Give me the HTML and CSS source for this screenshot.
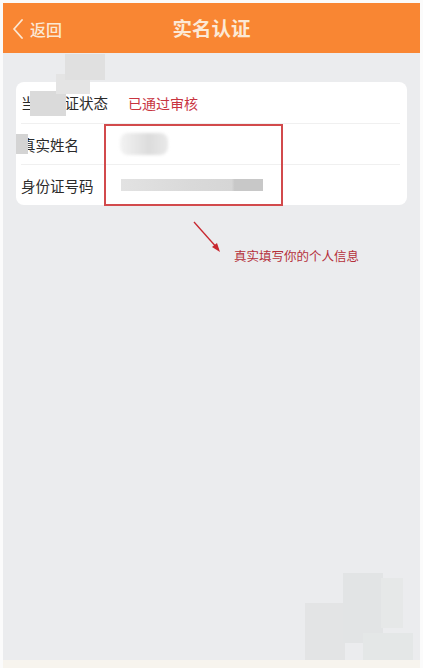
FILE: index.html
```html
<!DOCTYPE html>
<html lang="zh">
<head>
<meta charset="utf-8">
<title>实名认证</title>
<link rel="stylesheet" href="styles.css">
</head>
<body>
<div class="screen">
  <header class="header">
    <div class="back">
      <svg class="chev" width="12" height="20" viewBox="0 0 12 20"><path d="M10 1 L2 10 L10 19" fill="none" stroke="#fbe8d4" stroke-width="1.8" stroke-linecap="round" stroke-linejoin="round"/></svg>
      <span>返回</span>
    </div>
    <h1 class="title">实名认证</h1>
    <div></div>
  </header>

  <main class="main">
    <section class="card">
      <div class="row"><span class="label">当前认证状态</span><span class="value ok">已通过审核</span></div>
      <div class="row"><span class="label">真实姓名</span><span class="value"><span class="blur-name"></span></span></div>
      <div class="row"><span class="label">身份证号码</span><span class="value"><span class="blur-id"></span></span></div>
      <div class="mark"></div>
      <div class="mosaic m1"></div>
      <div class="mosaic m2"></div>
      <div class="mosaic m3"></div>
    </section>

    <div class="note">
      <svg class="arrow" width="34" height="36" viewBox="0 0 34 36">
        <line x1="4" y1="3" x2="28" y2="30" stroke="#c8262e" stroke-width="1.3"/>
        <path d="M30 33 L22 28 L27 24 Z" fill="#c8262e"/>
      </svg>
      <span class="note-text">真实填写你的个人信息</span>
    </div>
  </main>

  <div class="mosaic m4"></div>
  <div class="mosaic m5"></div>
  <div class="mosaic m6"></div>
  <div class="mosaic m7"></div>
  <div class="mosaic m8"></div>

  <footer class="tabbar"></footer>
</div>
</body>
</html>
```

FILE: styles.css
```css
html, body {
  margin: 0;
  padding: 0;
  background: #fbfbfb;
}
body {
  font-family: "Noto Sans CJK SC", "Noto Sans", sans-serif;
}
.screen {
  position: relative;
  margin: 3px 3px 0 3px;
  height: 665px;
  background: #ebecee;
  display: flex;
  flex-direction: column;
  overflow: hidden;
}
.header {
  height: 50px;
  background: #f98633;
  display: grid;
  grid-template-columns: 1fr auto 1fr;
  align-items: center;
  flex-shrink: 0;
}
.back {
  display: flex;
  align-items: center;
  gap: 6px;
  padding-left: 9px;
  color: #fbe8d4;
  font-size: 16px;
  font-weight: 500;
  margin-top: 1px;
}
.chev { display: block; }
.title {
  margin: 0;
  font-size: 19.5px;
  font-weight: 700;
  color: #fce9d6;
  letter-spacing: 0;
  line-height: 1;
}
.main {
  padding: 29px 13px 0 13px;
}
.card {
  position: relative;
  background: #ffffff;
  border-radius: 8px;
  display: flex;
  flex-direction: column;
}
.row {
  height: 41px;
  display: flex;
  align-items: center;
  margin: 0 7px 0 5px;
  border-top: 1px solid #f0f0f0;
  box-sizing: border-box;
}
.row:first-child { border-top: none; }
.label {
  width: 107px;
  font-size: 14.5px;
  color: #2a2a2a;
}
.value {
  font-size: 14px;
  color: #333;
}
.value.ok { color: #c8343f; }
.blur-name {
  display: block;
  width: 48px;
  height: 22px;
  margin-left: -8px;
  border-radius: 8px;
  background: linear-gradient(90deg, #f3f3f3 0%, #e8e8e8 30%, #dcdcdc 60%, #e9e9e9 100%);
  filter: blur(1.5px);
}
.blur-id {
  display: block;
  width: 142px;
  height: 12px;
  margin-left: -7px;
  background: linear-gradient(90deg, #e2e2e2 0%, #d9d9d9 50%, #d6d6d6 78%, #c8c8c8 80%, #c8c8c8 100%);
  filter: blur(0.6px);
}
.mark {
  position: absolute;
  left: 88px;
  top: 42px;
  width: 175px;
  height: 78px;
  border: 2px solid #d24a4c;
}
.mosaic {
  position: absolute;
}
.m1 { left: 14px; top: 9px; width: 36px; height: 25px; background: #dadada; }
.m2 { left: 40px; top: -8px; width: 34px; height: 20px; background: #e4e4e4; }
.m3 { left: 0px; top: 52px; width: 12px; height: 20px; background: #d4d4d4; }
.m4 { left: 62px; top: 51px; width: 40px; height: 26px; background: #e0e0e0; }
.m5 { left: 302px; top: 600px; width: 40px; height: 57px; background: #e3e4e5; }
.m6 { left: 340px; top: 570px; width: 40px; height: 70px; background: #e2e4e5; }
.m7 { left: 378px; top: 575px; width: 22px; height: 50px; background: #e6e8e8; }
.m8 { left: 360px; top: 630px; width: 50px; height: 27px; background: #e4e7e7; }
.note {
  display: flex;
  align-items: flex-end;
  margin: 14px 0 0 174px;
}
.arrow { display: block; }
.note-text {
  margin-left: 10px;
  margin-bottom: -9px;
  font-size: 12.5px;
  color: #b5303a;
  line-height: 16px;
}
.tabbar {
  margin-top: auto;
  height: 8px;
  background: #f7f4ee;
  flex-shrink: 0;
}
```
